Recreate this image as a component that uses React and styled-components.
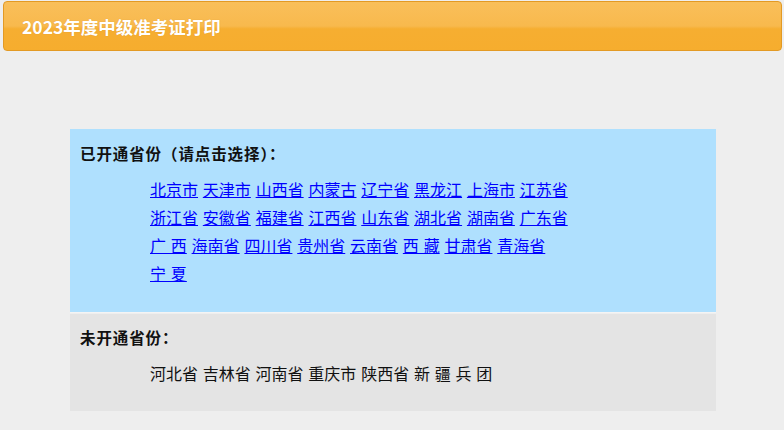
import styled, { createGlobalStyle } from 'styled-components';

const GlobalStyle = createGlobalStyle`
  html, body {
    margin: 0;
    padding: 0;
    background: #eeeeee;
    font-family: "Noto Sans CJK SC", "Noto Sans", sans-serif;
  }
`;

const Header = styled.div`
  margin: 1px 2px 0 3px;
  height: 48px;
  border: 1px solid #e39a24;
  border-radius: 4px;
  background: linear-gradient(to bottom, #f9bf5a 0%, #f8b94d 50%, #f6ae31 56%, #f6ad2e 100%);
  display: flex;
  align-items: center;
  padding-left: 18px;
  color: #ffffff;
  font-size: 17.5px;
  font-weight: bold;
  text-shadow: 0 0 1px rgba(160, 90, 0, 0.3);
`;

const Board = styled.div`
  width: 646px;
  margin: 78px 0 0 70px;
  display: flex;
  flex-direction: column;
  gap: 1px;
`;

const Section = styled.div`
  background: ${p => (p.$open ? '#afe0fe' : '#e4e4e4')};
  padding: ${p => (p.$open ? '14px 10px 25px' : '13px 10px 24px')};
  border-bottom: ${p => (p.$open ? '1px solid #f4f4f4' : 'none')};
`;

const Heading = styled.div`
  font-size: 15.5px;
  line-height: 20px;
  font-weight: bold;
  letter-spacing: 0.9px;
  color: #111111;
`;

const Provinces = styled.div`
  width: 428px;
  margin-left: 70px;
  margin-top: 12px;
  font-size: 16px;
  line-height: 28px;
  word-spacing: 1.2px;
  color: #111111;
`;

const ProvinceLink = styled.a`
  color: #0000ff;
  text-decoration: underline;
  white-space: nowrap;
  cursor: pointer;
`;

const openList = [
  '北京市', '天津市', '山西省', '内蒙古', '辽宁省', '黑龙江', '上海市', '江苏省',
  '浙江省', '安徽省', '福建省', '江西省', '山东省', '湖北省', '湖南省', '广东省',
  '广 西', '海南省', '四川省', '贵州省', '云南省', '西 藏', '甘肃省', '青海省',
  '宁 夏',
];

const closedList = ['河北省', '吉林省', '河南省', '重庆市', '陕西省', '新 疆 兵 团'];

export default function App() {
  return (
    <>
      <GlobalStyle />
      <Header>2023年度中级准考证打印</Header>
      <Board>
        <Section $open>
          <Heading>已开通省份（请点击选择）：</Heading>
          <Provinces>
            {openList.map((name, i) => (
              <span key={name}>
                <ProvinceLink href="#">{name}</ProvinceLink>
                {i < openList.length - 1 ? ' ' : ''}
              </span>
            ))}
          </Provinces>
        </Section>
        <Section>
          <Heading>未开通省份：</Heading>
          <Provinces>{closedList.join(' ')}</Provinces>
        </Section>
      </Board>
    </>
  );
}
